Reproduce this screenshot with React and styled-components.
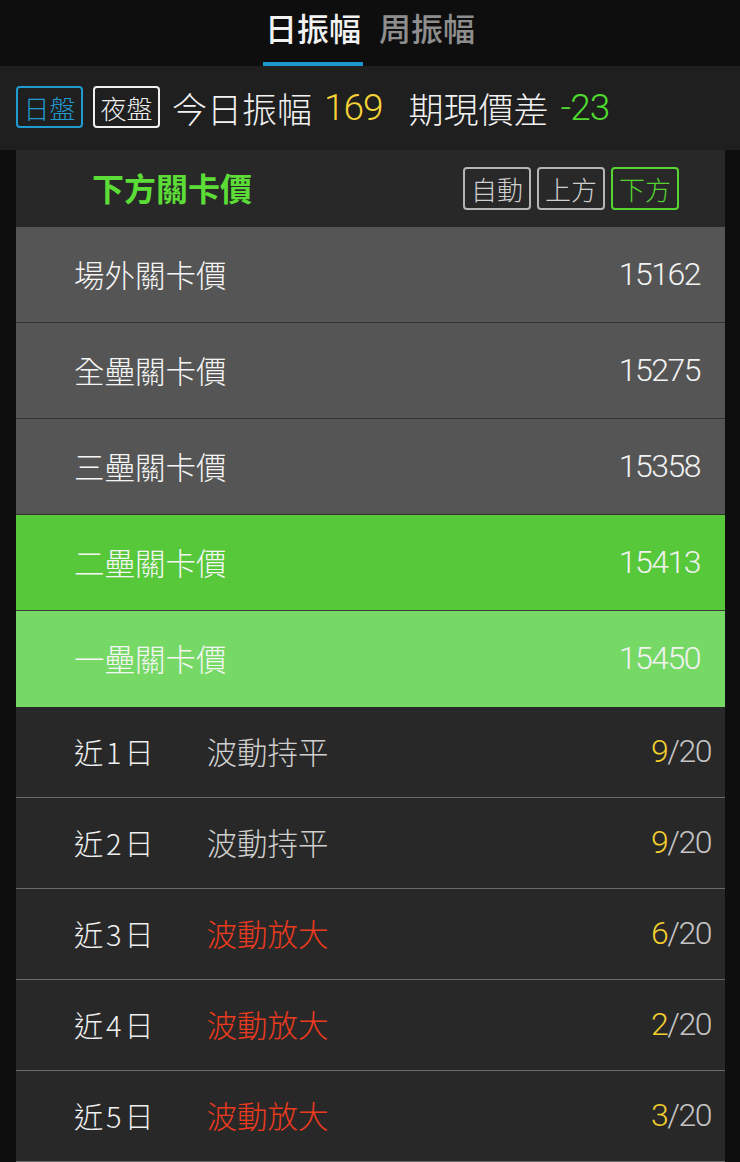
import React from "react";
import styled, { createGlobalStyle } from "styled-components";

const GlobalStyle = createGlobalStyle`
  html, body { margin: 0; padding: 0; background: #0e0e0e; }
  body { font-family: "Noto Sans CJK TC", "Noto Sans", sans-serif; color: #eee; }
`;

const Page = styled.div`
  width: 740px;
  min-height: 1162px;
  background: #0e0e0e;
`;

const TabBar = styled.div`
  height: 66px;
  display: flex;
  justify-content: center;
  align-items: flex-end;
  gap: 14px;
  background: #0e0e0e;
`;

const Tab = styled.div`
  height: 66px;
  box-sizing: border-box;
  padding: 0 2px 8px;
  display: flex;
  align-items: center;
  font-size: 32px;
  font-weight: 500;
  color: ${(p) => (p.$active ? "#f2f2f2" : "#8e8e8e")};
  border-bottom: 4px solid ${(p) => (p.$active ? "#1c95d0" : "transparent")};
`;

const InfoBar = styled.div`
  height: 84px;
  background: #1f1f1f;
  display: flex;
  align-items: center;
  padding-left: 16px;
  padding-bottom: 2px;
  box-sizing: border-box;
`;

const Badge = styled.div`
  height: 42px;
  width: 67px;
  box-sizing: border-box;
  border: 2px solid ${(p) => p.$color};
  color: ${(p) => p.$color};
  border-radius: 4px;
  display: flex;
  align-items: center;
  justify-content: center;
  font-size: 26px;
  font-weight: 300;
  margin-right: 10px;
`;

const InfoText = styled.span`
  font-size: 35px;
  font-weight: 300;
  color: #f2f2f2;
  margin-left: 2px;
  margin-right: 12px;
`;

const InfoValue = styled.span`
  font-family: "Roboto", "Liberation Sans", sans-serif;
  font-weight: 300;
  font-size: 37px;
  letter-spacing: -1px;
  color: ${(p) => p.$color};
  margin-right: 24px;
`;

const Panel = styled.div`
  margin: 0 15px 0 16px;
  background: #282828;
`;

const PanelHeader = styled.div`
  height: 77px;
  box-sizing: border-box;
  display: flex;
  align-items: center;
  justify-content: space-between;
  padding: 0 46px 4px 76px;
`;

const PanelTitle = styled.div`
  font-size: 32px;
  font-weight: 700;
  color: #5cdc37;
`;

const ModeGroup = styled.div`
  display: flex;
  gap: 6px;
  margin-top: 4px;
`;

const ModeButton = styled.div`
  width: 68px;
  height: 43px;
  box-sizing: border-box;
  border: 2px solid ${(p) => (p.$active ? "#56d432" : "#b5b5b5")};
  color: ${(p) => (p.$active ? "#56d432" : "#cfcfcf")};
  border-radius: 4px;
  display: flex;
  align-items: center;
  justify-content: center;
  font-size: 26px;
  font-weight: 300;
`;

const LevelRow = styled.div`
  height: 96px;
  box-sizing: border-box;
  border-bottom: 1px solid ${(p) => p.$line};
  background: ${(p) => p.$bg};
  display: flex;
  align-items: center;
  justify-content: space-between;
  padding: 0 25px 2px 58px;
`;

const LevelName = styled.div`
  font-size: 30.5px;
  font-weight: 300;
  color: #f5f5f5;
`;

const Num = styled.span`
  font-family: "Roboto", "Liberation Sans", sans-serif;
  font-weight: 300;
  font-size: 32px;
  letter-spacing: -1.5px;
  color: ${(p) => p.$color || "#f2f2f2"};
`;

const StatRow = styled.div`
  height: 91px;
  box-sizing: border-box;
  border-bottom: 1px solid #6a6a6a;
  display: flex;
  align-items: center;
  padding: 0 14px 2px 58px;
`;

const DayLabel = styled.div`
  font-size: 29px;
  font-weight: 300;
  color: #f0f0f0;
  letter-spacing: 3px;
  margin-right: 50px;
`;

const Trend = styled.div`
  font-size: 30.5px;
  font-weight: 300;
  color: ${(p) => (p.$up ? "#ec3a1e" : "#cfcfcf")};
  flex: 1;
`;

const levels = [
  { name: "場外關卡價", value: "15162", bg: "#555555", line: "#333333" },
  { name: "全壘關卡價", value: "15275", bg: "#555555", line: "#333333" },
  { name: "三壘關卡價", value: "15358", bg: "#555555", line: "#333333" },
  { name: "二壘關卡價", value: "15413", bg: "#56c83a", line: "#3b3b3b" },
  { name: "一壘關卡價", value: "15450", bg: "#76d966", line: "#76d966" },
];

const stats = [
  { day: "1", trend: "波動持平", up: false, n: "9" },
  { day: "2", trend: "波動持平", up: false, n: "9" },
  { day: "3", trend: "波動放大", up: true, n: "6" },
  { day: "4", trend: "波動放大", up: true, n: "2" },
  { day: "5", trend: "波動放大", up: true, n: "3" },
];

export default function App() {
  return (
    <Page>
      <GlobalStyle />
      <TabBar>
        <Tab $active>日振幅</Tab>
        <Tab>周振幅</Tab>
      </TabBar>
      <InfoBar>
        <Badge $color="#1f9bd1">日盤</Badge>
        <Badge $color="#f0f0f0">夜盤</Badge>
        <InfoText>今日振幅</InfoText>
        <InfoValue $color="#f6d336">169</InfoValue>
        <InfoText>期現價差</InfoText>
        <InfoValue $color="#4fdc2d">-23</InfoValue>
      </InfoBar>
      <Panel>
        <PanelHeader>
          <PanelTitle>下方關卡價</PanelTitle>
          <ModeGroup>
            <ModeButton>自動</ModeButton>
            <ModeButton>上方</ModeButton>
            <ModeButton $active>下方</ModeButton>
          </ModeGroup>
        </PanelHeader>
        {levels.map((l) => (
          <LevelRow key={l.name} $bg={l.bg} $line={l.line}>
            <LevelName>{l.name}</LevelName>
            <Num>{l.value}</Num>
          </LevelRow>
        ))}
        {stats.map((s) => (
          <StatRow key={s.day}>
            <DayLabel>近{s.day}日</DayLabel>
            <Trend $up={s.up}>{s.trend}</Trend>
            <div>
              <Num $color="#f2cf2e">{s.n}</Num>
              <Num $color="#c4c4c4">/20</Num>
            </div>
          </StatRow>
        ))}
      </Panel>
    </Page>
  );
}
